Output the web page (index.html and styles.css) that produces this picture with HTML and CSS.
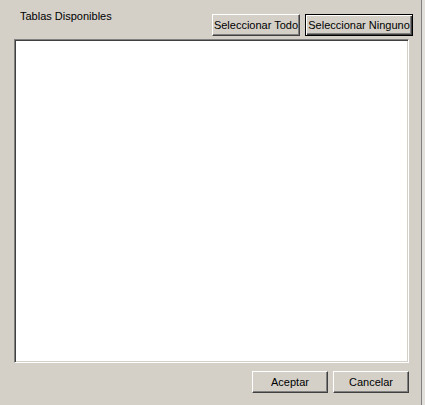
FILE: index.html
```html
<!DOCTYPE html>
<html lang="es">
<head>
    <meta charset="UTF-8">
    <meta name="viewport" content="width=device-width, initial-scale=1.0">
    <title>Tablas Disponibles</title>
    <link rel="stylesheet" href="styles.css">
</head>
<body>
<div class="dialog">
    <div class="top">
        <span class="label">Tablas Disponibles</span>
        <div class="actions">
            <button class="btn btn-todo">Seleccionar Todo</button>
            <button class="btn btn-default btn-ninguno">Seleccionar Ninguno</button>
        </div>
    </div>
    <div class="list"></div>
    <div class="footer">
        <button class="btn btn-ok">Aceptar</button>
        <button class="btn btn-ok">Cancelar</button>
    </div>
</div>
</body>
</html>
```

FILE: styles.css
```css
html, body {
    margin: 0;
    padding: 0;
    background: #e2dfda;
    font-family: 'Liberation Sans', Arial, sans-serif;
    font-size: 11px;
    color: #000;
}
.dialog {
    width: 422px;
    height: 405px;
    box-sizing: border-box;
    background: #d4d0c8;
    border-right: 1px solid #808080;
    display: flex;
    flex-direction: column;
}
.top {
    display: flex;
    align-items: flex-start;
    height: 39px;
    padding: 0 8px 0 20px;
}
.label {
    flex: 1;
    margin-top: 10px;
    line-height: 13px;
}
.actions {
    display: flex;
    gap: 5px;
    margin-top: 14px;
}
.btn {
    box-sizing: border-box;
    height: 22px;
    padding: 0;
    font-family: inherit;
    font-size: 11px;
    color: #000;
    background: #d4d0c8;
    border: 1px solid;
    border-color: #fff #404040 #404040 #fff;
    box-shadow: inset -1px -1px #808080;
    text-align: center;
    line-height: 18px;
}
.btn-todo {
    width: 88px;
}
.btn-ninguno {
    width: 108px;
}
.btn-default {
    border-color: #000;
    box-shadow: inset 1px 1px #fff, inset -1px -1px #404040, inset -2px -2px #808080;
}
.list {
    margin-left: 14px;
    width: 395px;
    height: 324px;
    box-sizing: border-box;
    background: #fff;
    border: 1px solid;
    border-color: #808080 #fff #fff #808080;
    box-shadow: inset 1px 1px #404040, inset -1px -1px #d4d0c8;
}
.footer {
    display: flex;
    justify-content: flex-end;
    gap: 5px;
    margin-top: 8px;
    padding-right: 12px;
}
.btn-ok {
    width: 76px;
}
```
